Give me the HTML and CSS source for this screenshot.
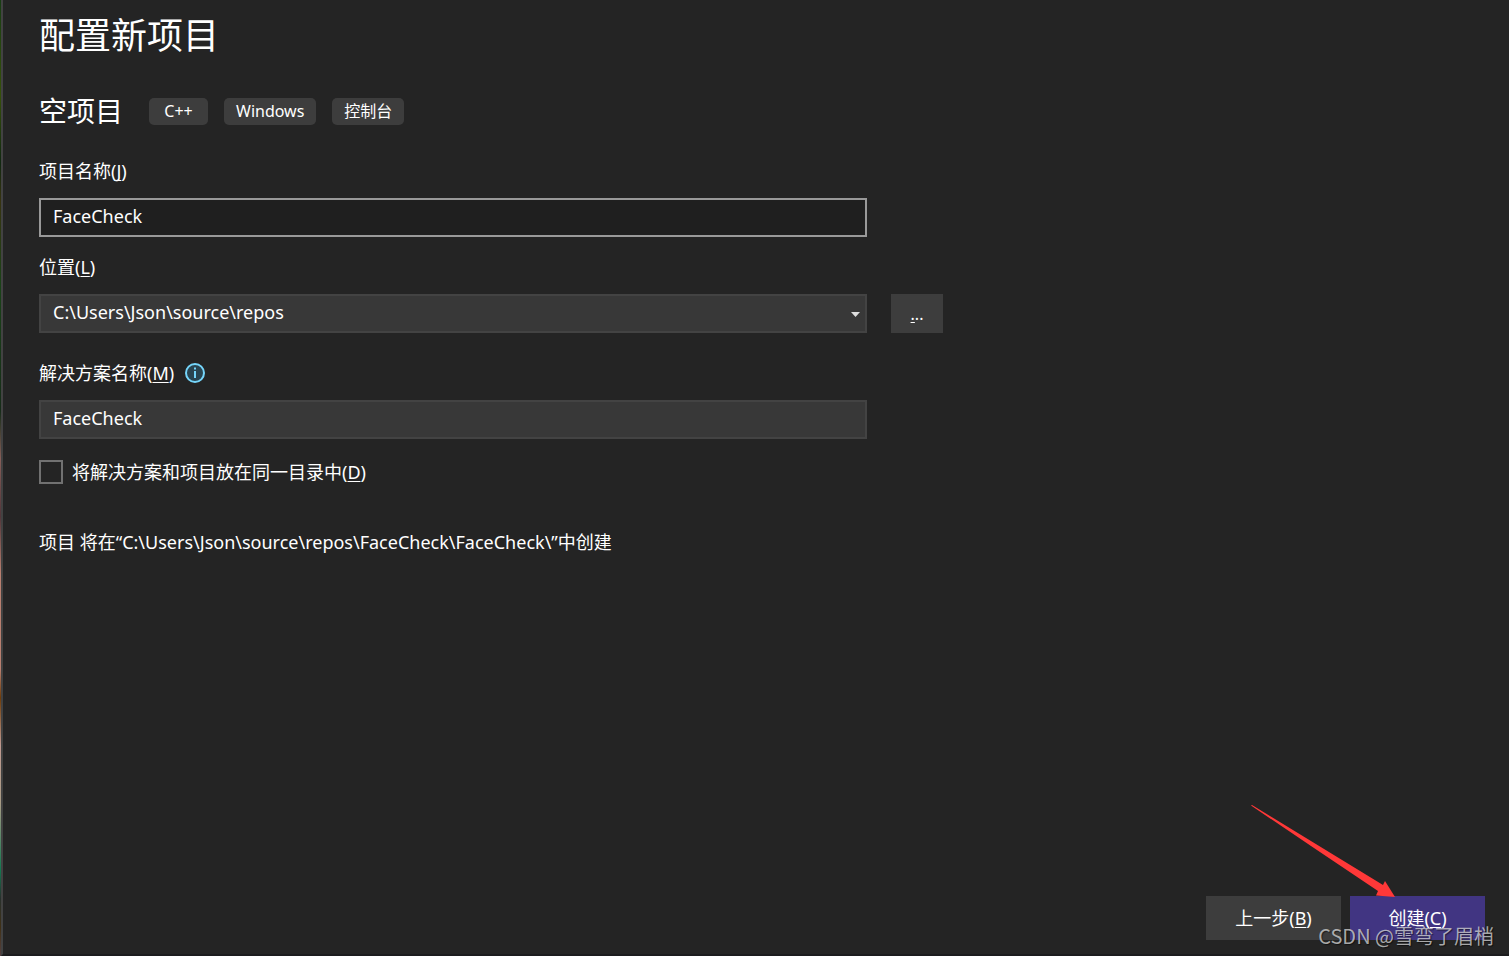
FILE: index.html
```html
<!DOCTYPE html>
<html lang="zh-CN">
<head>
<meta charset="utf-8">
<title>配置新项目</title>
<link rel="stylesheet" href="styles.css">
</head>
<body>
<div class="desktop">
  <main class="dialog">
    <h1 class="title">配置新项目</h1>
    <div class="template">
      <h2 class="template-name">空项目</h2>
      <ul class="tags">
        <li class="tag">C++</li>
        <li class="tag">Windows</li>
        <li class="tag">控制台</li>
      </ul>
    </div>
    <form class="form">
      <div class="field">
        <label class="label" for="name">项目名称(<u>J</u>)</label>
        <input class="box box-active" id="name" type="text" value="FaceCheck">
      </div>
      <div class="field field-location">
        <label class="label" for="location">位置(<u>L</u>)</label>
        <div class="row">
          <div class="combo">
            <select class="box" id="location"><option>C:\Users\Json\source\repos</option></select>
            <svg class="combo-arrow" viewBox="0 0 9 5" aria-hidden="true"><path d="M0 0h9L4.500 5z"/></svg>
          </div>
          <button class="browse" type="button" aria-label="浏览"><u>.</u>..</button>
        </div>
      </div>
      <div class="field">
        <div class="label-row">
          <label class="label" for="solution">解决方案名称(<u>M</u>)</label>
          <svg class="info" viewBox="0 0 20 20" aria-hidden="true">
            <circle cx="10" cy="10" r="9"/>
            <path d="M9 4.500h2v2H9zM9 8h2v7H9z"/>
          </svg>
        </div>
        <input class="box" id="solution" type="text" value="FaceCheck">
      </div>
      <label class="check"><input class="checkbox" type="checkbox"><span>将解决方案和项目放在同一目录中(<u>D</u>)</span></label>
      <p class="summary">项目 将在“C:\Users\Json\source\repos\FaceCheck\FaceCheck\”中创建</p>
    </form>
    <footer class="actions">
      <button class="button" type="button">上一步(<u>B</u>)</button>
      <button class="button button-primary" type="button">创建(<u>C</u>)</button>
    </footer>
    <svg class="arrow" viewBox="0 0 144 92" aria-hidden="true"><path d="M0 0.500L1 0L132 80L134 76L144 92L125 90.500L127 86L60 41Z"/></svg>
    <div class="watermark">CSDN @雪弯了眉梢</div>
  </main>
</div>
</body>
</html>
```
FILE: styles.css
```css
* { box-sizing: border-box; }

body {
  margin: 0;
  background: #242424;
  color: #fff;
  font: 18px/24px "Noto Sans", "Noto Sans CJK SC", sans-serif;
}

.desktop {
  min-height: 100vh;
  display: flex;
  padding-left: 1px;
  background: linear-gradient(#173d12, #355008 10%, #102810 17%, #37330f 21%, #194317 30%, #162c18 43%, #865e58 48%, #52363a 54%, #b98070 60%, #b98070 70%, #6f3c08 73%, #c09a90 78%, #a89b85 84%, #137850 91%, #28302c 94%, #403015 97%, #554040);
}

.dialog {
  position: relative;
  flex: 1;
  display: flex;
  flex-direction: column;
  padding: 12px 24px 14px 36px;
  border-left: 2px solid #424242;
  border-bottom: 2px solid #1c1c1e;
  background: #242424;
}

.title {
  margin: 0;
  font-size: 36px;
  line-height: 48px;
  font-weight: 400;
}

.template {
  display: flex;
  align-items: center;
  gap: 26px;
  margin-top: 32px;
}

.template-name {
  margin: 0;
  font-size: 28px;
  line-height: 38px;
  font-weight: 400;
}

.tags {
  display: flex;
  gap: 16px;
  margin: 0;
  padding: 0;
  list-style: none;
}

.tag {
  min-width: 59px;
  padding: 0 12px;
  border-radius: 5px;
  background: #3d3d3d;
  font-size: 16px;
  line-height: 27px;
  text-align: center;
}

.form { margin-top: 29px; }

.field {
  display: flex;
  flex-direction: column;
  gap: 15px;
  max-width: 828px;
  margin-bottom: 18px;
}

.field-location {
  max-width: 904px;
  margin-bottom: 28px;
}

.label { align-self: flex-start; }

.label-row {
  display: flex;
  align-items: center;
  gap: 11px;
}

u {
  text-decoration: underline 1px;
  text-underline-offset: 2px;
  text-decoration-skip-ink: none;
}

.info {
  width: 20px;
  height: 20px;
  fill: #75d5fa;
}

.info circle {
  fill: #294450;
  stroke: #75d5fa;
  stroke-width: 2;
}

.box {
  display: block;
  width: 100%;
  height: 39px;
  padding: 0 12px 3px;
  border: 2px solid #434343;
  border-radius: 0;
  outline: 0;
  appearance: none;
  background: #383838;
  color: inherit;
  font: inherit;
}

.box-active {
  border-color: #999;
  background: #1f1f1f;
}

.row {
  display: flex;
  gap: 24px;
}

.combo {
  position: relative;
  flex: 1;
}

.combo-arrow {
  position: absolute;
  top: 18px;
  right: 7px;
  width: 9px;
  height: 5px;
  fill: #dedede;
  pointer-events: none;
}

.browse,
.button {
  border: 0;
  background: #3d3d3d;
  color: inherit;
  font: inherit;
}

.browse {
  width: 52px;
  padding: 0;
  font-size: 16px;
}

.check {
  display: flex;
  align-items: center;
  gap: 9px;
  margin-top: 21px;
}

.checkbox {
  width: 24px;
  height: 24px;
  margin: 0;
  border: 2px solid #717171;
  appearance: none;
}

.summary { margin: 46px 0 0; }

.actions {
  display: flex;
  justify-content: flex-end;
  gap: 9px;
  margin-top: auto;
}

.button {
  width: 135px;
  height: 44px;
  padding: 0;
}

.button-primary { background: #413582; }

.arrow {
  position: absolute;
  right: 114px;
  bottom: 57px;
  width: 144px;
  height: 92px;
  fill: #ff3838;
}

.watermark {
  position: absolute;
  right: 15px;
  bottom: 5px;
  color: rgba(215, 215, 215, .75);
  font: 20px/26px "Noto Sans CJK SC", sans-serif;
  text-shadow: 1px 1px 1px rgba(0, 0, 0, .5);
  pointer-events: none;
}
```
